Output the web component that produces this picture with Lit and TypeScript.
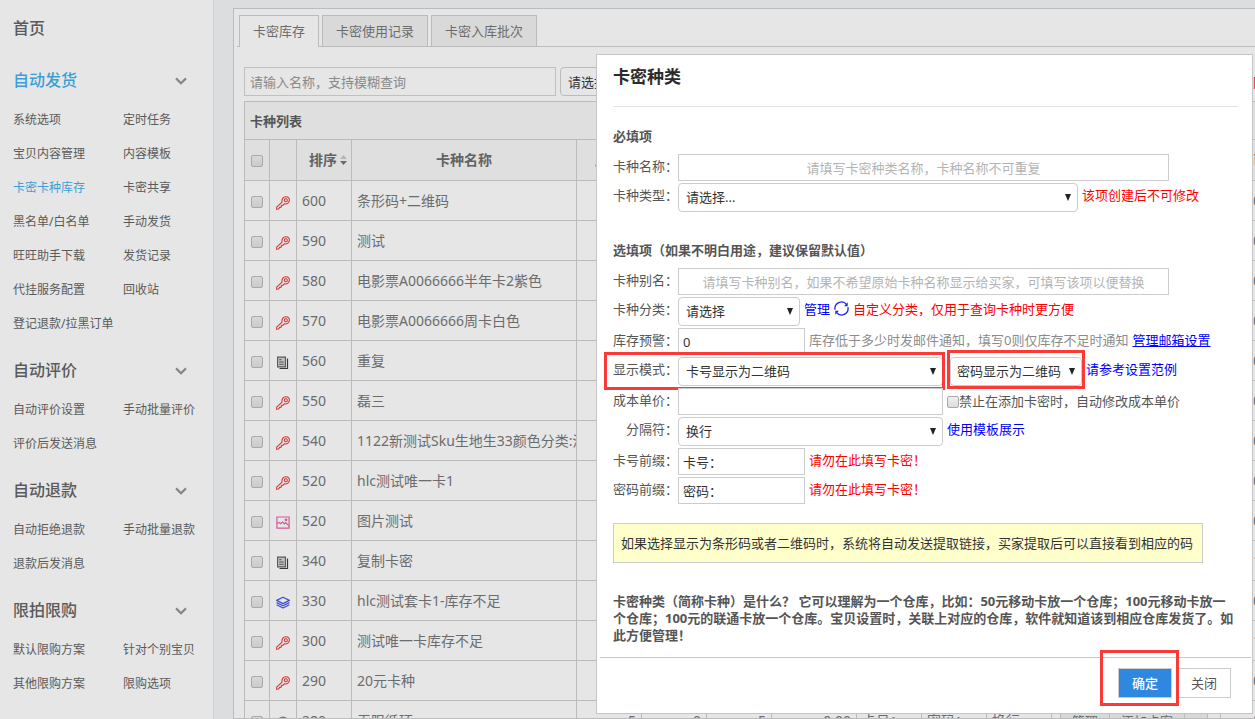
import { LitElement, html, css, svg, nothing } from "lit";
import { customElement } from "lit/decorators.js";
import { classMap } from "lit/directives/class-map.js";

const sections = [
  {
    title: "自动发货",
    current: true,
    items: ["系统选项", "定时任务", "宝贝内容管理", "内容模板", "卡密卡种库存", "卡密共享", "黑名单/白名单", "手动发货", "旺旺助手下载", "发货记录", "代挂服务配置", "回收站", "登记退款/拉黑订单"],
  },
  { title: "自动评价", current: false, items: ["自动评价设置", "手动批量评价", "评价后发送消息"] },
  { title: "自动退款", current: false, items: ["自动拒绝退款", "手动批量退款", "退款后发消息"] },
  { title: "限拍限购", current: false, items: ["默认限购方案", "针对个别宝贝", "其他限购方案", "限购选项"] },
];

type Kind = "key" | "doc" | "image" | "layers" | "loop";

const rows: { kind: Kind; order: number; name: string; used: number; detail?: boolean }[] = [
  { kind: "key", order: 600, name: "条形码+二维码", used: 0 },
  { kind: "key", order: 590, name: "测试", used: 0 },
  { kind: "key", order: 580, name: "电影票A0066666半年卡2紫色", used: 0 },
  { kind: "key", order: 570, name: "电影票A0066666周卡白色", used: 0 },
  { kind: "doc", order: 560, name: "重复", used: 0 },
  { kind: "key", order: 550, name: "磊三", used: 0 },
  { kind: "key", order: 540, name: "1122新测试Sku生地生33颜色分类:浅", used: 0 },
  { kind: "key", order: 520, name: "hlc测试唯一卡1", used: 0 },
  { kind: "image", order: 520, name: "图片测试", used: 0 },
  { kind: "doc", order: 340, name: "复制卡密", used: 1 },
  { kind: "layers", order: 330, name: "hlc测试套卡1-库存不足", used: 0 },
  { kind: "key", order: 300, name: "测试唯一卡库存不足", used: 1 },
  { kind: "key", order: 290, name: "20元卡种", used: 0 },
  { kind: "loop", order: 280, name: "无限循环", used: 0, detail: true },
];

const glyphs = {
  key: svg`<g fill="none" stroke="#d92f2f" stroke-width="1.1" stroke-linejoin="round">
    <path d="M6 6.200C5.400 3 7.200.8 9.800.8c2.300 0 3.600 1.500 3.600 3.300 0 2.600-2.200 4.200-5 3.800L7.100 9.200l-1.600.2-.3 1.700-1.500.3L2.600 13l-2 .2.100-2z"/>
    <circle cx="9.800" cy="4.200" r="1.500"/></g>`,
  doc: svg`<path d="M1.600 1.100h7.800v9.800H1.600z" fill="#c2c2c2" stroke="#555" stroke-width="1.100"/>
    <path d="M3.500 12.500h8V2.500" fill="none" stroke="#3a3a3a" stroke-width="1.200"/>
    <path d="M3.200 3.700h2.500M3.200 6h4.600M3.200 8.300h4.600" stroke="#555" stroke-width="1"/>`,
  image: svg`<g fill="none" stroke="#cf5c94" stroke-width="1.200">
    <path d="M.9 1h12.200v11.200H.9z"/><path d="M1.200 7.400l1.800-1 1.500 1.400 2-1.800 2 1.800 1.200-1.200 3.400 3.600"/></g>
    <circle cx="10" cy="3.800" r="1.400" fill="#cf5c94"/>`,
  layers: svg`<g fill="none" stroke="#3d4dd2" stroke-width="1.200" stroke-linejoin="round">
    <path d="M7 1.200L13.400 4.400 7 7.600.6 4.400z"/><path d="M.6 6.600L7 9.800l6.400-3.200"/><path d="M.6 8.800L7 12l6.400-3.200"/></g>`,
  loop: svg`<circle cx="7" cy="6.600" r="5.400" fill="none" stroke="#4f9a44" stroke-width="1.600"/>
    <path d="M4.600 7h4.800" stroke="#4f9a44" stroke-width="1.400"/>`,
};

@customElement("app-root")
export class AppRoot extends LitElement {
  static styles = css`
    :host {
      display: block;
      position: relative;
      height: 100vh;
      overflow: hidden;
      background: #dcdddf;
      color: #6b6c6d;
      font: 13px/18px "Noto Sans", "Noto Sans CJK SC", sans-serif;
    }
    * { box-sizing: border-box; }
    a { color: inherit; text-decoration: none; }
    h1, h2, h3, p { margin: 0; font-size: inherit; }
    input, select, button { font: inherit; color: inherit; border-radius: 0; margin: 0; }

    .page { display: flex; height: 100%; }

    .side {
      flex: 0 0 214px;
      padding: 6px 0 0 13px;
      background: #e6e6e6;
      border-right: 1px solid #cecfd1;
      color: #5a5a5a;
      font-size: 12px;
    }
    .group { margin-bottom: 7px; }
    .group.home { margin-bottom: 8px; }
    .group-title {
      display: flex;
      align-items: center;
      justify-content: space-between;
      height: 44px;
      padding-right: 26px;
      font-size: 16px;
      font-weight: 500;
      line-height: 24px;
    }
    .links {
      display: grid;
      grid-template-columns: 110px 1fr;
      grid-auto-rows: 34px;
      align-items: center;
      padding-top: 1px;
      white-space: nowrap;
    }
    .current { color: #3a9fd6; }
    .chevron { width: 12px; height: 8px; margin-top: 2px; }

    .main {
      flex: 1;
      min-width: 0;
      margin: 8px 0 0 19px;
      padding: 6px 0 0 3px;
      background: #e6e6e6;
      border: 1px solid #bbbcbe;
      border-right: 0;
      overflow: hidden;
    }
    .tabs { display: flex; gap: 3px; padding-left: 2px; border-bottom: 1px solid #bbb; }
    .tab {
      height: 31px;
      padding: 0 13px;
      border: 1px solid #bbb;
      border-bottom: 0;
      background: #d9d9d9;
      white-space: nowrap;
    }
    .tab.on { height: 32px; margin-bottom: -1px; padding-bottom: 2px; background: #e6e6e6; }
    .content { width: 1077px; margin: 20px 0 0 7px; }
    .toolbar { display: flex; gap: 4px; align-items: center; margin-bottom: 5px; padding-right: 16px; }
    .search {
      width: 312px;
      height: 29px;
      padding: 0 5px;
      border: 1px solid #c0c0c0;
      background: transparent;
    }
    .search::placeholder { color: #8a8a8a; opacity: 1; }
    .more { margin-left: auto; color: #e60000; }

    .list { border: 1px solid #bbb; border-width: 1px 0 0 1px; }
    .list-title {
      height: 38px;
      padding: 0 5px;
      border-bottom: 1px solid #bbb;
      background: #dfdfdf;
      color: #555;
      font-weight: 700;
      line-height: 38px;
    }
    table { width: 100%; table-layout: fixed; border-collapse: separate; border-spacing: 0; font-size: 14px; }
    th, td {
      height: 40px;
      padding: 0 5px;
      border: 1px solid #bbb;
      border-width: 0 1px 1px 0;
      overflow: hidden;
      white-space: nowrap;
      text-align: left;
    }
    th { height: 41px; background: #dfdfdf; color: #626364; text-align: center; }
    .c-check { width: 25px; }
    .c-kind { width: 27px; }
    .c-order { width: 55px; }
    .c-name { width: 225px; }
    .c-num { width: 65px; }
    .c-price { width: 85px; }
    .c-ops { width: 169px; }
    .c-last { width: 100px; }
    .num { text-align: right; }
    .used { padding-left: 32px; text-align: left; }
    .pick { padding: 2px 0 0; text-align: center; }
    .kind { padding: 4px 0 0; text-align: center; }
    .kind svg { display: block; width: 14px; height: 14px; margin: 0 auto; }
    .order { padding-right: 4px; }
    .sort { display: flex; align-items: center; justify-content: flex-end; gap: 3px; }
    .sort svg { width: 7px; height: 11px; }
    .ops { display: flex; padding-left: 3px; font-size: 13px; }
    .ops button { height: 30px; padding: 0 11px; border: 1px solid #bbb; border-left-width: 0; background: #d8d8d8; }
    .ops button:first-child { border-left-width: 1px; }

    .box {
      appearance: none;
      display: block;
      flex: none;
      width: 12px;
      height: 12px;
      margin: 0 auto;
      border: 1px solid #a9a9a9;
      border-radius: 2px;
      background: linear-gradient(#d9d9d9, #cacaca);
    }
    .dialog .box { margin: 0; background: linear-gradient(#f0f0f0, #dcdcdc); }

    .select {
      appearance: none;
      height: 29px;
      padding: 0 7px;
      border: 1px solid #ccc;
      border-radius: 4px;
      background: transparent
        url("data:image/svg+xml,%3Csvg xmlns='http://www.w3.org/2000/svg' width='6' height='7'%3E%3Cpath d='M0 0h6L3 7z' fill='%23222'/%3E%3C/svg%3E")
        no-repeat right 6px center;
      color: #333;
    }
    .toolbar .select { width: 120px; border-color: #bbb; }

    .dialog {
      position: absolute;
      top: 54px;
      right: 2px;
      width: 657px;
      border: 1px solid #c4c5c6;
      background: #fff;
      color: #555;
    }
    .body { padding: 0 14px 13px 16px; }
    .title {
      height: 52px;
      padding-top: 11px;
      border-bottom: 1px solid #e4e4e4;
      color: #2b2b2b;
      font-size: 17px;
      line-height: 22px;
    }
    .sub { margin: 29px 0 9px; }
    .sub.first { margin-top: 20px; }
    .fields { display: flex; flex-direction: column; gap: 2px; }
    .field { display: flex; gap: 4px; white-space: nowrap; line-height: 25px; }
    .pair { display: flex; position: relative; }
    .label { flex: 0 0 65px; text-align: right; }
    .text { height: 27px; padding: 0 4px; border: 1px solid #ccc; background: #fff; color: #333; }
    .text::placeholder { color: #b4b4b4; opacity: 1; }
    .wide { width: 491px; text-align: center; }
    .short { width: 127px; }
    .mid { width: 265px; }
    .w-type { width: 400px; }
    .w-cat { width: 122px; }
    .w-code { width: 132px; padding-left: 6px; }
    .red { color: #f00; }
    .blue { color: #00f; }
    .under { text-decoration: underline; }
    .grey { color: #8c8c8c; }
    .refresh { width: 15px; height: 15px; margin-top: 4px; }
    .tick { display: flex; align-items: center; }
    .mark::after { content: ""; position: absolute; border: 3px solid #fb3a38; pointer-events: none; }
    .mark-field::after { inset: -5px -2px -4px -9px; }
    .mark-code { margin-left: 3px; }
    .mark-code::after { inset: -7px -3px -3px -3px; }
    .tip {
      width: 590px;
      height: 40px;
      margin: 19px 0 30px;
      padding: 0 7px;
      border: 1px solid #ccc;
      background: #ffc;
      color: #333;
      line-height: 38px;
      white-space: nowrap;
    }
    .about { font-weight: 700; line-height: 17px; }
    .foot {
      display: flex;
      justify-content: flex-end;
      gap: 5px;
      margin: 0 1px 0 3px;
      padding: 10px 20px 15px;
      border-top: 1px solid #c8c8c8;
    }
    .btn { height: 30px; padding: 0 13px; border: 1px solid #ccc; background: #fff; }
    .btn.go { background: #2f88df; color: #fff; font-weight: 500; }
    .mark-btn::after { inset: -18px -7px -8px -18px; }
  `;

  private section(s: (typeof sections)[number]) {
    return html`<section class="group">
      <h2 class=${classMap({ "group-title": true, current: s.current })}>
        ${s.title}
        <svg class="chevron" viewBox="0 0 12 8"><path d="M1 1.4l5 4.8 5-4.8" fill="none" stroke="#868686" stroke-width="2.200"/></svg>
      </h2>
      <div class="links">
        ${s.items.map((t) => html`<a href="#" class=${classMap({ current: t === "卡密卡种库存" })}>${t}</a>`)}
      </div>
    </section>`;
  }

  private row(r: (typeof rows)[number]) {
    const d = r.detail;
    return html`<tr>
      <td class="pick"><input class="box" type="checkbox" aria-label=${r.name} /></td>
      <td class="kind"><svg viewBox="0 0 14 14">${glyphs[r.kind]}</svg></td>
      <td>${r.order}</td>
      <td>${r.name}</td>
      <td class="num">${d ? "5" : nothing}</td>
      <td class="num">${d ? "0" : nothing}</td>
      <td class="num">${d ? "5" : nothing}</td>
      <td class="num">${d ? "0.00" : nothing}</td>
      <td>${d ? "卡号：" : nothing}</td>
      <td>${d ? "密码：" : nothing}</td>
      <td>${d ? "换行" : nothing}</td>
      <td>${d ? html`<div class="ops"><button>管理</button><button>添加卡密</button><button aria-label="更多"></button></div>` : nothing}</td>
      <td class="used">${r.used}</td>
    </tr>`;
  }

  render() {
    return html`
      <div class="page">
        <nav class="side">
          <section class="group home"><h2 class="group-title"><a href="#">首页</a></h2></section>
          ${sections.map((s) => this.section(s))}
        </nav>
        <main class="main">
          <div class="tabs" role="tablist">
            <button class="tab on" role="tab">卡密库存</button>
            <button class="tab" role="tab">卡密使用记录</button>
            <button class="tab" role="tab">卡密入库批次</button>
          </div>
          <div class="content">
            <div class="toolbar">
              <input class="search" type="text" aria-label="名称" placeholder="请输入名称，支持模糊查询" />
              <select class="select" aria-label="分类"><option>请选择</option></select>
              <a class="more" href="#">隐藏卡种</a>
            </div>
            <div class="list">
              <h3 class="list-title">卡种列表</h3>
              <table>
                <colgroup>
                  <col class="c-check" /><col class="c-kind" /><col class="c-order" /><col class="c-name" />
                  <col class="c-num" /><col class="c-num" /><col class="c-num" /><col class="c-price" />
                  <col class="c-num" /><col class="c-num" /><col class="c-num" /><col class="c-ops" /><col class="c-last" />
                </colgroup>
                <thead>
                  <tr>
                    <th class="pick"><input class="box" type="checkbox" aria-label="全选" /></th>
                    <th></th>
                    <th class="order"><span class="sort">排序<svg viewBox="0 0 7 11"><path d="M3.5 0L7 4H0z" fill="#b5b5b5"/><path d="M0 6h7l-3.500 4z" fill="#6a6a6a"/></svg></span></th>
                    <th>卡种名称</th>
                    <th>库存</th>
                    <th></th><th></th><th></th><th></th><th></th><th></th><th></th>
                    <th class="used">已用</th>
                  </tr>
                </thead>
                <tbody>${rows.map((r) => this.row(r))}</tbody>
              </table>
            </div>
          </div>
        </main>
      </div>

      <div class="dialog" role="dialog" aria-labelledby="dlg-title">
        <div class="body">
          <h1 class="title" id="dlg-title">卡密种类</h1>
          <h3 class="sub first">必填项</h3>
          <div class="fields">
            <div class="field"><div class="pair">
              <label class="label" for="name">卡种名称：</label>
              <input class="text wide" id="name" type="text" placeholder="请填写卡密种类名称，卡种名称不可重复" />
            </div></div>
            <div class="field">
              <div class="pair">
                <label class="label" for="type">卡种类型：</label>
                <select class="select w-type" id="type"><option>请选择...</option></select>
              </div>
              <span class="red">该项创建后不可修改</span>
            </div>
          </div>
          <h3 class="sub">选填项（如果不明白用途，建议保留默认值）</h3>
          <div class="fields">
            <div class="field"><div class="pair">
              <label class="label" for="alias">卡种别名：</label>
              <input class="text wide" id="alias" type="text" placeholder="请填写卡种别名，如果不希望原始卡种名称显示给买家，可填写该项以便替换" />
            </div></div>
            <div class="field">
              <div class="pair">
                <label class="label" for="cat">卡种分类：</label>
                <select class="select w-cat" id="cat"><option>请选择</option></select>
              </div>
              <a class="blue" href="#">管理</a>
              <svg class="refresh" viewBox="0 0 14 14"><g fill="none" stroke="#22f" stroke-width="1.200"><path d="M1 8.200A6.100 6.100 0 0 1 11.800 3.300"/><path d="M13 5.800A6.100 6.100 0 0 1 2.200 10.700"/></g><path d="M12.800 1.200v3.600H9.400zM1.200 12.800V9.200h3.400z" fill="#22f"/></svg>
              <span class="red">自定义分类，仅用于查询卡种时更方便</span>
            </div>
            <div class="field">
              <div class="pair">
                <label class="label" for="warn">库存预警：</label>
                <input class="text short" id="warn" type="text" .value=${"0"} />
              </div>
              <span class="grey">库存低于多少时发邮件通知，填写0则仅库存不足时通知</span>
              <a class="blue under" href="#">管理邮箱设置</a>
            </div>
            <div class="field">
              <div class="pair mark mark-field">
                <label class="label" for="mode">显示模式：</label>
                <select class="select mid" id="mode"><option>卡号显示为二维码</option></select>
              </div>
              <div class="pair mark mark-code">
                <select class="select w-code" aria-label="密码显示模式"><option>密码显示为二维码</option></select>
              </div>
              <a class="blue" href="#">请参考设置范例</a>
            </div>
            <div class="field">
              <div class="pair">
                <label class="label" for="cost">成本单价：</label>
                <input class="text mid" id="cost" type="text" />
              </div>
              <label class="tick"><input class="box" type="checkbox" />禁止在添加卡密时，自动修改成本单价</label>
            </div>
            <div class="field">
              <div class="pair">
                <label class="label" for="sep">分隔符：</label>
                <select class="select mid" id="sep"><option>换行</option></select>
              </div>
              <a class="blue" href="#">使用模板展示</a>
            </div>
            <div class="field">
              <div class="pair">
                <label class="label" for="pre1">卡号前缀：</label>
                <input class="text short" id="pre1" type="text" .value=${"卡号："} />
              </div>
              <span class="red">请勿在此填写卡密！</span>
            </div>
            <div class="field">
              <div class="pair">
                <label class="label" for="pre2">密码前缀：</label>
                <input class="text short" id="pre2" type="text" .value=${"密码："} />
              </div>
              <span class="red">请勿在此填写卡密！</span>
            </div>
          </div>
          <p class="tip">如果选择显示为条形码或者二维码时，系统将自动发送提取链接，买家提取后可以直接看到相应的码</p>
          <p class="about">卡密种类（简称卡种）是什么？ 它可以理解为一个仓库，比如：50元移动卡放一个仓库；100元移动卡放一个仓库；100元的联通卡放一个仓库。宝贝设置时，关联上对应的仓库，软件就知道该到相应仓库发货了。如此方便管理！</p>
        </div>
        <div class="foot">
          <div class="pair mark mark-btn"><button class="btn go">确定</button></div>
          <button class="btn">关闭</button>
        </div>
      </div>
    `;
  }
}
